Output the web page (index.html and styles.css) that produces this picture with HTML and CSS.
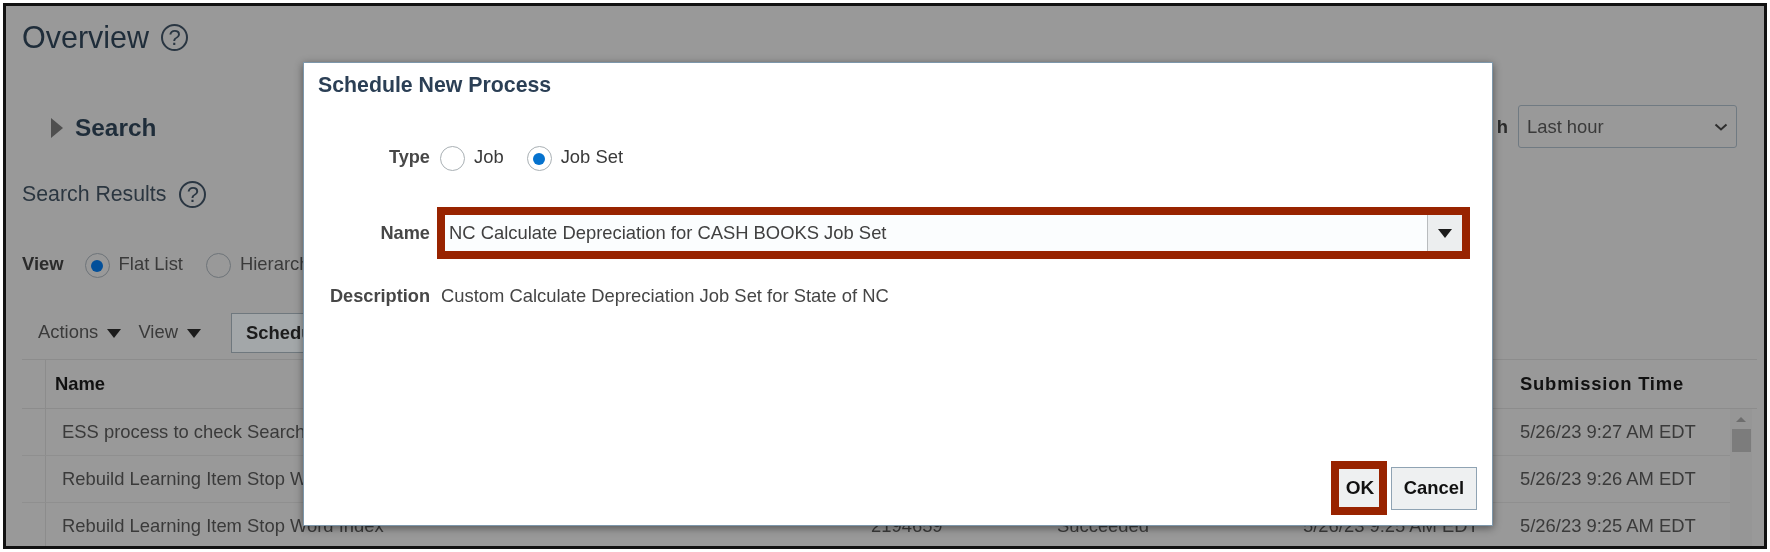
FILE: index.html
```html
<!DOCTYPE html>
<html>
<head>
  <title>Overview</title>
  <link rel="stylesheet" href="styles.css">
</head>
<body>
  <div class="frame">
    <!-- Page behind the dialog -->
    <div class="page-title-row">
      <h1 class="page-title">Overview</h1>
      <span class="help-icon">?</span>
    </div>

    <div class="search-row">
      <div class="search-head">
        <span class="arrow-right"></span>
        <h2 class="search-title">Search</h2>
      </div>
      <div class="search-time">
        <span class="bold-label">h</span>
        <div class="select-box">
          <span>Last hour</span>
          <svg class="chevron" width="14" height="8" viewBox="0 0 14 8"><path d="M1.5 1.5 7 6.5l5.5-5" fill="none" stroke="#2e2e2e" stroke-width="2"/></svg>
        </div>
      </div>
    </div>

    <div class="results-row">
      <h3 class="results-title">Search Results</h3>
      <span class="help-icon">?</span>
    </div>

    <div class="view-row">
      <span class="bold-label">View</span>
      <span class="radio radio-dim checked"></span>
      <span class="radio-text">Flat List</span>
      <span class="radio radio-dim second"></span>
      <span class="radio-text">Hierarchy</span>
    </div>

    <div class="toolbar">
      <span class="menu">Actions <span class="arrow-down"></span></span>
      <span class="menu">View <span class="arrow-down"></span></span>
      <button class="schedule-btn">Schedule New Process</button>
    </div>

    <div class="table">
      <div class="table-head">
        <div class="cell-select"></div>
        <div class="col-name th">Name</div>
        <div class="col-id th"></div>
        <div class="col-status th"></div>
        <div class="col-sched th"></div>
        <div class="col-time th">Submission Time</div>
      </div>
      <div class="table-body">
        <div class="rows">
          <div class="row">
            <div class="cell-select"></div>
            <div class="col-name td">ESS process to check Search</div>
            <div class="col-id td"></div>
            <div class="col-status td"></div>
            <div class="col-sched td"></div>
            <div class="col-time td">5/26/23 9:27 AM EDT</div>
          </div>
          <div class="row">
            <div class="cell-select"></div>
            <div class="col-name td">Rebuild Learning Item Stop Word Index</div>
            <div class="col-id td"></div>
            <div class="col-status td"></div>
            <div class="col-sched td"></div>
            <div class="col-time td">5/26/23 9:26 AM EDT</div>
          </div>
          <div class="row">
            <div class="cell-select"></div>
            <div class="col-name td">Rebuild Learning Item Stop Word Index</div>
            <div class="col-id td">2194659</div>
            <div class="col-status td">Succeeded</div>
            <div class="col-sched td">5/26/23 9:25 AM EDT</div>
            <div class="col-time td">5/26/23 9:25 AM EDT</div>
          </div>
        </div>
        <div class="scrollbar">
          <span class="scroll-up"></span>
          <span class="scroll-thumb"></span>
        </div>
      </div>
    </div>

    <!-- Dialog -->
    <div class="dialog">
      <h2 class="dialog-title">Schedule New Process</h2>
      <div class="form-row type-row">
        <label class="form-label">Type</label>
        <span class="radio"></span>
        <span class="radio-text">Job</span>
        <span class="radio checked second"></span>
        <span class="radio-text">Job Set</span>
      </div>
      <div class="form-row name-row">
        <label class="form-label">Name</label>
        <div class="name-field highlight">
          <span class="name-value">NC Calculate Depreciation for CASH BOOKS Job Set</span>
          <span class="name-btn"><span class="arrow-down big"></span></span>
        </div>
      </div>
      <div class="form-row desc-row">
        <label class="form-label">Description</label>
        <span class="desc-text">Custom Calculate Depreciation Job Set for State of NC</span>
      </div>
      <div class="dialog-footer">
        <button class="dlg-btn ok-btn highlight">OK</button>
        <button class="dlg-btn cancel-btn">Cancel</button>
      </div>
    </div>
  </div>
</body>
</html>
```

FILE: styles.css
```css
* {
  box-sizing: border-box;
}
body {
  margin: 0;
  background-color: #ffffff;
  font-family: "Liberation Sans", Arial, sans-serif;
  color: #3a3a3a;
}
h1, h2, h3 {
  margin: 0;
  font-weight: normal;
}
.frame {
  position: relative;
  margin: 3px;
  height: 546px;
  padding: 11px 27px 0 16px;
  background-color: #999999;
  border: 3px solid #111111;
  overflow: hidden;
  filter: blur(0.4px);
}
.page-title-row {
  display: flex;
  align-items: center;
  height: 40px;
}
.page-title {
  font-size: 30.5px;
  color: #1f2d3a;
}
.help-icon {
  width: 27px;
  height: 27px;
  margin-left: 12px;
  border: 2px solid #2a3642;
  border-radius: 50%;
  color: #2a3642;
  font-size: 22px;
  line-height: 23px;
  text-align: center;
}
.search-row {
  display: flex;
  justify-content: space-between;
  align-items: center;
  height: 43px;
  margin-top: 49px;
  padding-left: 29px;
}
.search-head {
  display: flex;
  align-items: center;
}
.arrow-right {
  width: 0;
  height: 0;
  border-top: 10px solid transparent;
  border-bottom: 10px solid transparent;
  border-left: 12px solid #4f4f4f;
}
.search-title {
  margin-left: 12px;
  font-size: 24.4px;
  font-weight: bold;
  color: #1f2d3a;
}
.search-time {
  display: flex;
  align-items: center;
  gap: 10px;
  margin-bottom: 2px;
}
.select-box {
  display: flex;
  justify-content: space-between;
  align-items: center;
  width: 219px;
  height: 43px;
  padding: 0 8px;
  border: 1px solid #707a82;
  border-radius: 3px;
  font-size: 18.4px;
}
.bold-label {
  font-size: 18.4px;
  font-weight: bold;
  color: #2b2b2b;
}
.results-row {
  display: flex;
  align-items: center;
  height: 40px;
  margin-top: 25px;
}
.results-title {
  font-size: 21.3px;
  color: #2b3640;
}
.results-row .help-icon {
  margin-left: 13px;
}
.view-row {
  display: flex;
  align-items: center;
  height: 40px;
  margin-top: 30px;
}
.radio {
  flex: none;
  display: flex;
  justify-content: center;
  align-items: center;
  width: 25px;
  height: 25px;
  margin-top: 3px;
  border: 1px solid #a9b0b4;
  border-radius: 50%;
  background-color: #ffffff;
}
.radio.checked::after {
  content: "";
  width: 12px;
  height: 12px;
  border-radius: 50%;
  background-color: #0572ce;
}
.radio-dim {
  margin-left: 21px;
  background-color: transparent;
  border-color: #6e7479;
}
.radio-dim.checked::after {
  background-color: #03509a;
}
.radio-text {
  margin-left: 9px;
  font-size: 18.4px;
}
.view-row .second {
  margin-left: 23px;
}
.toolbar {
  display: flex;
  align-items: center;
  height: 40px;
  margin-top: 29px;
  padding-left: 16px;
  font-size: 18.4px;
}
.menu {
  margin-right: 17px;
  margin-bottom: 2px;
}
.arrow-down {
  display: inline-block;
  margin-left: 4px;
  vertical-align: middle;
  border-left: 7px solid transparent;
  border-right: 7px solid transparent;
  border-top: 9px solid #1c1c1c;
}
.schedule-btn {
  height: 40px;
  width: 200px;
  margin-left: 13px;
  padding: 0 0 0 14px;
  background-color: #a3a7a9;
  border: 1px solid #6f787e;
  font-family: inherit;
  font-size: 18.4px;
  font-weight: bold;
  color: #1c1c1c;
  text-align: left;
  white-space: nowrap;
}
.table {
  margin-top: 6px;
  border-top: 1px solid #8c8c8c;
  width: 1735px;
}
.table-head, .row {
  display: flex;
}
.table-head {
  height: 49px;
  border-bottom: 1px solid #8c8c8c;
}
.table-body {
  display: flex;
}
.rows {
  width: 1708px;
}
.row {
  height: 47px;
  border-bottom: 1px solid #8f8f8f;
}
.cell-select {
  width: 24px;
  border-right: 1px solid #8c8c8c;
}
.col-name {
  width: 809px;
}
.col-id {
  width: 186px;
}
.col-status {
  width: 246px;
}
.col-sched {
  width: 217px;
}
.col-time {
  flex: 1;
}
.th, .td {
  display: flex;
  align-items: center;
  font-size: 18.4px;
  white-space: nowrap;
}
.th {
  font-weight: bold;
  color: #111111;
  padding-left: 9px;
}
.td {
  padding-left: 16px;
}
.col-time.th {
  padding-left: 16px;
  letter-spacing: 0.8px;
}
.scrollbar {
  display: flex;
  flex-direction: column;
  align-items: center;
  width: 22px;
  background-color: #969696;
  padding-top: 8px;
}
.scroll-up {
  border-left: 5px solid transparent;
  border-right: 5px solid transparent;
  border-bottom: 5px solid #6d6d6d;
}
.scroll-thumb {
  width: 19px;
  height: 23px;
  margin-top: 7px;
  background-color: #7c7c7c;
}
.dialog {
  position: absolute;
  left: 297px;
  top: 56px;
  display: flex;
  flex-direction: column;
  width: 1190px;
  height: 464px;
  padding: 0 15px 10px 0;
  background-color: #ffffff;
  border: 1px solid #7d97ab;
  box-shadow: 0 2px 8px rgba(0, 0, 0, 0.45);
}
.dialog-title {
  margin: 10px 0 0 14px;
  font-size: 21.3px;
  line-height: 24px;
  font-weight: bold;
  color: #2b3f55;
}
.form-row {
  display: flex;
  align-items: center;
}
.form-label {
  width: 126px;
  font-size: 18.2px;
  font-weight: bold;
  color: #474747;
  text-align: right;
}
.type-row {
  height: 40px;
  margin-top: 40px;
}
.type-row .radio:first-of-type {
  margin-left: 10px;
}
.type-row .second {
  margin-left: 23px;
}
.name-row {
  margin-top: 30px;
}
.name-field {
  display: flex;
  width: 1033px;
  height: 52px;
  margin-left: 7px;
  background-color: #fbfdfe;
}
.highlight {
  border: 8px solid #982300;
}
.name-value {
  flex: 1;
  padding-left: 4px;
  font-size: 18.4px;
  line-height: 35px;
  color: #404040;
}
.name-btn {
  display: flex;
  justify-content: center;
  align-items: center;
  width: 35px;
  background-color: #eceeef;
  border-left: 1px solid #b9bcbe;
}
.arrow-down.big {
  margin: 0;
}
.desc-row {
  height: 24px;
  margin-top: 25px;
}
.desc-text {
  margin-left: 11px;
  font-size: 18.4px;
  color: #454545;
}
.dialog-footer {
  display: flex;
  justify-content: flex-end;
  align-items: center;
  gap: 4px;
  margin-top: auto;
}
.dlg-btn {
  padding: 0;
  background-color: #eef0f1;
  font-family: inherit;
  font-size: 18.4px;
  font-weight: bold;
  color: #111111;
}
.ok-btn {
  width: 56px;
  height: 54px;
  font-size: 19px;
  padding-left: 2px;
}
.cancel-btn {
  width: 86px;
  height: 43px;
  border: 1px solid #8fa3b3;
}
```
